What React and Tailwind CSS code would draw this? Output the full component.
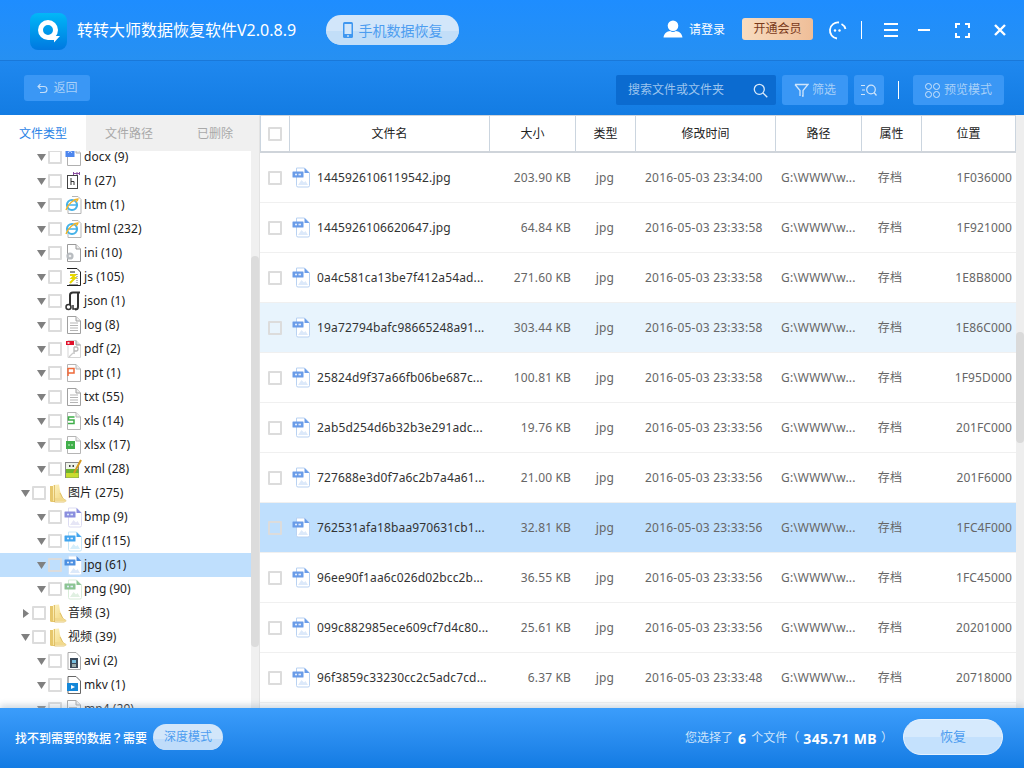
import React from "react";

const Check = ({ className = "" }) => (
  <span className={`block w-[14px] h-[14px] shrink-0 border-2 border-[#dcdcdc] rounded-[1px] ${className}`} />
);

const Sheet = ({ children, stroke = "#a9a9a9" }) => (
  <svg width="17" height="20" viewBox="0 0 17 20" className="shrink-0">
    <path d="M2.500 1.500H11L15.500 6V18.500H2.500Z" fill="#fff" stroke={stroke} />
    <path d="M11 1.500V6H15.500" fill="#eee" stroke={stroke} />
    {children}
  </svg>
);

const ImgIcon = ({ c = "#6a9ce8", soft = "#b9d2f2", hill = "#dce9fa" }) => (
  <svg width="19" height="21" viewBox="0 0 19 21" className="shrink-0">
    <path d="M4.500 1H12.500L17.500 6V18.500Q17.500 20 16 20H6Q4.500 20 4.500 18.500Z" fill="#fff" stroke={soft} />
    <path d="M12.500 1L17.500 6H12.500Z" fill={c} />
    <rect x="0.500" y="4.500" width="11" height="6" rx="0.500" fill={c} />
    <rect x="3" y="6.700" width="2" height="1.600" fill="#dfeafa" />
    <rect x="6.500" y="6.700" width="2.500" height="1.600" fill="#dfeafa" />
    <path d="M6 18L9.500 13L12 15.500L13.500 14L16 18Z" fill={hill} />
  </svg>
);

const Folder = () => (
  <svg width="18" height="20" viewBox="0 0 18 20" className="shrink-0">
    <defs>
      <linearGradient id="fold" x1="0" y1="0" x2="1" y2="1">
        <stop offset="0" stopColor="#fdf3c4" />
        <stop offset="1" stopColor="#f2d67c" />
      </linearGradient>
    </defs>
    <path d="M1 3H6V19H2.500Q1 19 1 17.500Z" fill="#e6c76c" />
    <path d="M4 2L10 1.500L11 8L13 13L14 18H4Z" fill="url(#fold)" />
    <path d="M5.500 2V19H15.500L17 17.500L14 15.500L11 10" fill="none" stroke="#d9b65a" strokeWidth="0.800" />
    <path d="M6 18.500H17.500L14 15H6Z" fill="#f1d98e" />
  </svg>
);

const TreeIcon = ({ t }) => {
  switch (t) {
    case "docx":
      return <Sheet stroke="#b0b0b0"><rect x="0.500" y="0" width="9" height="10" fill="#4d86ee" /><path d="M3 6L5 3.500L7 6" stroke="#cfe0ff" fill="none" /></Sheet>;
    case "h":
      return (
        <svg width="17" height="20" viewBox="0 0 17 20" className="shrink-0">
          <rect x="2.500" y="4.500" width="10" height="13" fill="#fff" stroke="#444" />
          <path d="M6 7V14M6 10.500H9V14" stroke="#333" fill="none" />
          <path d="M8 2.500H15M12 1V4M14.500 1V4M8.500 1V4" stroke="#8a4ea0" />
        </svg>
      );
    case "ie":
      return (
        <svg width="17" height="20" viewBox="0 0 17 20" className="shrink-0">
          <path d="M7 1.500H13L16 4.500V18.500H3V12" fill="#fff" stroke="#b5b5b5" />
          <ellipse cx="7" cy="10" rx="5" ry="5" fill="none" stroke="#45b2e8" strokeWidth="2.200" />
          <path d="M3 10H11" stroke="#45b2e8" strokeWidth="1.500" />
          <path d="M1 15C3 9 9 4 13 4C13 5 12 6 11 7" fill="none" stroke="#f0b429" strokeWidth="1.300" />
        </svg>
      );
    case "ini":
      return <Sheet stroke="#9a9a9a"><circle cx="5" cy="13" r="3.600" fill="#b8bcc0" /><circle cx="5" cy="13" r="1.300" fill="#eee" /></Sheet>;
    case "js":
      return (
        <svg width="17" height="20" viewBox="0 0 17 20" className="shrink-0">
          <path d="M2 1.500H12L15.500 5V18.500H2" fill="#fff" stroke="#222" />
          <path d="M5 5H10M4 18H13" stroke="#222" />
          <path d="M5 8H10L7 11H10L5 16" stroke="#e8d800" strokeWidth="2" fill="none" />
          <path d="M12 7V16" stroke="#777" strokeDasharray="1 1" />
        </svg>
      );
    case "json":
      return (
        <svg width="17" height="20" viewBox="0 0 17 20" className="shrink-0">
          <path d="M5 17V4Q5 1.500 8 1.500H15" fill="none" stroke="#333" strokeWidth="2" />
          <path d="M13 2V16Q13 18.500 10 18.500" fill="none" stroke="#333" strokeWidth="2" />
          <circle cx="3.500" cy="16" r="2.500" fill="#fff" stroke="#333" strokeWidth="1.500" />
          <path d="M8 14V18H11" stroke="#333" strokeWidth="1.500" fill="none" />
        </svg>
      );
    case "txt":
      return <Sheet stroke="#a0a0a0"><path d="M5 8H13M5 10.500H13M5 13H13M5 15.500H13" stroke="#b5b5b5" /></Sheet>;
    case "pdf":
      return (
        <svg width="17" height="20" viewBox="0 0 17 20" className="shrink-0">
          <path d="M3 1.500H11L15.500 6V18.500H3Z" fill="#fff" stroke="#d5d5d5" />
          <path d="M11 1.500V6H15.500" fill="#ddd" stroke="#999" />
          <rect x="1" y="2" width="8" height="4" fill="#e0102a" />
          <rect x="2.500" y="3.200" width="2" height="1.600" fill="#fff" />
          <path d="M9 8H11.500Q13 8 13 10T11.500 12H9V8M9 12V15" fill="none" stroke="#b9b9b9" strokeWidth="1.300" />
          <path d="M4 18L8 14" stroke="#ccc" strokeWidth="1.300" />
        </svg>
      );
    case "ppt":
      return <Sheet stroke="#b5b5b5"><path d="M3 5.500H9V10H3M3 5V13" fill="none" stroke="#ee6a3a" strokeWidth="1.500" /></Sheet>;
    case "xls":
      return <Sheet stroke="#b5b5b5"><path d="M9.500 6H3.500V9H9V12.500H3" fill="none" stroke="#3fae49" strokeWidth="1.500" /></Sheet>;
    case "xlsx":
      return <Sheet stroke="#b5b5b5"><rect x="1" y="6" width="9" height="8" fill="#3fae49" /><rect x="3" y="9.500" width="2" height="1" fill="#d0f0d0" /><rect x="6" y="9.500" width="2" height="1" fill="#d0f0d0" /></Sheet>;
    case "xml":
      return (
        <svg width="17" height="20" viewBox="0 0 17 20" className="shrink-0">
          <rect x="0.500" y="3.500" width="13" height="15" fill="#eef3e8" stroke="#888" />
          <rect x="1" y="10" width="12.500" height="8.500" fill="#6db52e" />
          <rect x="1" y="14" width="12.500" height="4.500" fill="#c7dd30" />
          <rect x="4" y="6" width="1.500" height="2" fill="#444" />
          <rect x="7.500" y="6" width="1.500" height="2" fill="#444" />
          <path d="M16 1L9 14" stroke="#d59a22" strokeWidth="2" />
        </svg>
      );
    case "bmp":
      return <ImgIcon c="#8a8ede" soft="#dcdcf2" hill="#e6e6f6" />;
    case "gif":
      return <ImgIcon c="#42a5ee" soft="#c6e6f8" hill="#d6eefa" />;
    case "jpg":
      return <ImgIcon c="#4d8fe0" soft="#cfe2f8" />;
    case "png":
      return <ImgIcon c="#8cc493" soft="#d8ecd9" hill="#e0f0e2" />;
    case "avi":
      return (
        <svg width="17" height="20" viewBox="0 0 17 20" className="shrink-0">
          <path d="M3 1.500H11L15.500 6V18.500H3Z" fill="#fff" stroke="#aaa" />
          <rect x="5" y="7" width="8" height="10" fill="#3b4a5a" />
          <rect x="7" y="9" width="4" height="3" fill="#78c0e0" />
          <rect x="7" y="13" width="4" height="3" fill="#9aa" />
        </svg>
      );
    case "mkv":
      return (
        <svg width="17" height="20" viewBox="0 0 17 20" className="shrink-0">
          <path d="M3 1.500H11L15.500 6V18.500H3Z" fill="#fff" stroke="#666" />
          <rect x="2" y="8" width="11" height="8" fill="#1487d8" />
          <path d="M6 10L10 12L6 14Z" fill="#fff" />
        </svg>
      );
    case "mp4":
      return <Sheet stroke="#aaa"><rect x="4" y="8" width="8" height="8" fill="#bbb" /></Sheet>;
    default:
      return <Folder />;
  }
};

const Arrow = ({ open }) =>
  open ? (
    <svg width="9" height="7" viewBox="0 0 9 7" className="shrink-0"><path d="M0 0H9L4.500 7Z" fill="#808080" /></svg>
  ) : (
    <svg width="9" height="9" viewBox="0 0 9 9" className="shrink-0"><path d="M2 0L8 4.500L2 9Z" fill="#808080" /></svg>
  );

const tree = [
  ["docx (9)", "docx", 2],
  ["h (27)", "h", 2],
  ["htm (1)", "ie", 2],
  ["html (232)", "ie", 2],
  ["ini (10)", "ini", 2],
  ["js (105)", "js", 2],
  ["json (1)", "json", 2],
  ["log (8)", "txt", 2],
  ["pdf (2)", "pdf", 2],
  ["ppt (1)", "ppt", 2],
  ["txt (55)", "txt", 2],
  ["xls (14)", "xls", 2],
  ["xlsx (17)", "xlsx", 2],
  ["xml (28)", "xml", 2],
  ["图片 (275)", "folder", 1],
  ["bmp (9)", "bmp", 2],
  ["gif (115)", "gif", 2],
  ["jpg (61)", "jpg", 2, "selected"],
  ["png (90)", "png", 2],
  ["音频 (3)", "folder", 1, "closed"],
  ["视频 (39)", "folder", 1],
  ["avi (2)", "avi", 2],
  ["mkv (1)", "mkv", 2],
  ["mp4 (29)", "mp4", 2],
];

const rows = [
  ["1445926106119542.jpg", "203.90 KB", "2016-05-03 23:34:00", "1F036000"],
  ["1445926106620647.jpg", "64.84 KB", "2016-05-03 23:33:58", "1F921000"],
  ["0a4c581ca13be7f412a54ad...", "271.60 KB", "2016-05-03 23:33:58", "1E8B8000"],
  ["19a72794bafc98665248a91...", "303.44 KB", "2016-05-03 23:33:58", "1E86C000", "bg-[#e8f4fd]"],
  ["25824d9f37a66fb06be687c...", "100.81 KB", "2016-05-03 23:33:58", "1F95D000"],
  ["2ab5d254d6b32b3e291adc...", "19.76 KB", "2016-05-03 23:33:56", "201FC000"],
  ["727688e3d0f7a6c2b7a4a61...", "21.00 KB", "2016-05-03 23:33:56", "201F6000"],
  ["762531afa18baa970631cb1...", "32.81 KB", "2016-05-03 23:33:56", "1FC4F000", "bg-[#bfdffd]"],
  ["96ee90f1aa6c026d02bcc2b...", "36.55 KB", "2016-05-03 23:33:56", "1FC45000"],
  ["099c882985ece609cf7d4c80...", "25.61 KB", "2016-05-03 23:33:56", "20201000"],
  ["96f3859c33230cc2c5adc7cd...", "6.37 KB", "2016-05-03 23:33:48", "20718000"],
];

const heads = ["文件名", "大小", "类型", "修改时间", "路径", "属性", "位置"];

const Gloss = ({ className = "" }) => (
  <span className={`absolute left-0 right-0 bottom-0 rounded-t-[50%] rounded-b-full ${className}`} />
);

export default function App() {
  return (
    <div className="w-[1024px] h-[768px] overflow-hidden flex flex-col bg-white text-[12px] font-['Noto_Sans','Noto_Sans_CJK_SC',sans-serif] tracking-[0.14px]">
      {/* title bar */}
      <header className="h-[61px] shrink-0 flex items-center border-b border-[#1a78d8] bg-gradient-to-b from-[#1e8dff] to-[#2690f2] text-white">
        <div className="ml-[30px] w-[37px] h-[37px] mt-[2px] rounded-lg bg-gradient-to-b from-[#04b7f7] to-[#0278e0] flex items-center justify-center">
          <svg width="24" height="24" viewBox="0 0 24 24">
            <circle cx="11" cy="11" r="7.500" fill="none" stroke="#fff" strokeWidth="5" />
            <path d="M11 19L17 14.500V17H23L17 23.500V21H11Z" fill="#fff" />
          </svg>
        </div>
        <h1 className="ml-[10px] text-[16px] tracking-normal font-normal whitespace-nowrap">转转大师数据恢复软件V2.0.8.9</h1>
        <button className="relative ml-[30px] w-[133px] h-[30px] rounded-full bg-[#d2e6fa] overflow-hidden flex items-center justify-center gap-[6px] text-[14px] text-[#4d9df0] tracking-normal">
          <Gloss className="h-[14px] bg-[#c2def8]" />
          <svg width="10" height="16" viewBox="0 0 10 16" className="relative"><rect width="10" height="16" rx="1.500" fill="#3f97f0" /><rect x="1.500" y="2" width="7" height="10" fill="#d2e6fa" /><circle cx="5" cy="14" r="0.900" fill="#d2e6fa" /></svg>
          <span className="relative">手机数据恢复</span>
        </button>
        <div className="flex-1" />
        <svg width="20" height="18" viewBox="0 0 20 19" className="mb-[3px]"><circle cx="10" cy="6" r="5.600" fill="#fff" /><path d="M0 18.500C0.500 13.500 4 12 7 11.500C8.500 13 11.500 13 13 11.500C16 12 19.500 13.500 20 18.500Z" fill="#fff" /></svg>
        <span className="ml-[6px] mb-[1px] tracking-normal">请登录</span>
        <span className="ml-[17px] mb-[2px] w-[71px] h-[22px] rounded-[3px] bg-gradient-to-r from-[#f8dcc0] to-[#efbe98] text-[#79391a] flex items-center justify-center tracking-normal">开通会员</span>
        <svg width="19" height="19" viewBox="0 0 19 19" className="ml-[15px]">
          <path d="M11 1.500A8 8 0 1 0 9 17.500" fill="none" stroke="#fff" strokeWidth="1.800" />
          <path d="M13.500 3A8 8 0 0 1 17.500 8" fill="none" stroke="#fff" strokeWidth="1.800" />
          <circle cx="7" cy="9.500" r="1.200" fill="#fff" /><circle cx="11.500" cy="9.500" r="1.200" fill="#fff" />
        </svg>
        <span className="ml-[14px] w-px h-[18px] bg-white" />
        <svg width="14" height="14" viewBox="0 0 14 14" className="ml-[22px]"><path d="M0 1H14M0 7H14M0 13H14" stroke="#fff" strokeWidth="2" /></svg>
        <span className="ml-[20px] w-[12px] h-[2px] bg-white" />
        <svg width="15" height="15" viewBox="0 0 15 15" className="ml-[25px]"><path d="M1 5V1H5M10 1H14V5M14 10V14H10M5 14H1V10" stroke="#fff" strokeWidth="2" fill="none" /></svg>
        <svg width="12" height="12" viewBox="0 0 12 12" className="ml-[24px] mr-[18px]"><path d="M1 1L11 11M11 1L1 11" stroke="#fff" strokeWidth="2.400" /></svg>
      </header>

      {/* toolbar */}
      <div className="h-[54px] shrink-0 flex items-start pt-[14px] bg-gradient-to-b from-[#1f88ef] to-[#137ce3] text-[#a8d0f8]">
        <button className="ml-[24px] w-[66px] h-[26px] rounded-[3px] bg-[#3a97f5] flex items-center justify-center gap-[5px] pl-px tracking-normal">
          <svg width="11" height="11" viewBox="0 0 11 11"><path d="M3.500 1L1 3.500L3.500 6M1.500 3.500H7Q10 3.500 10 6.500T7 9.500H3" fill="none" stroke="#c4def9" strokeWidth="1.100" /></svg>
          返回
        </button>
        <div className="flex-1" />
        <div className="w-[160px] h-[30px] rounded-[2px] bg-[#0b6bd0] flex items-center pl-[12px] pr-[8px] text-[#9cc4ee] tracking-normal">
          <span className="flex-1">搜索文件或文件夹</span>
          <svg width="15" height="15" viewBox="0 0 15 15"><circle cx="6.300" cy="6.300" r="5" fill="none" stroke="#d8e9fa" strokeWidth="1.300" /><path d="M10 10L14.300 14.300" stroke="#d8e9fa" strokeWidth="1.300" /></svg>
        </div>
        <button className="ml-[6px] w-[66px] h-[30px] rounded-[3px] bg-[#3a97f5] flex items-center justify-center gap-[3px] tracking-normal">
          <svg width="15" height="15" viewBox="0 0 15 15"><path d="M1 1.500H14L9 7.500V13H8M6 13V7.500L1 1.500" fill="none" stroke="#d0e5fb" strokeWidth="1.300" /></svg>
          筛选
        </button>
        <button className="ml-[6px] w-[30px] h-[30px] rounded-[3px] bg-[#3a97f5] flex items-center justify-center">
          <svg width="16" height="12" viewBox="0 0 16 12"><path d="M0 1.500H4M1 6H4M0 10.500H4" stroke="#d0e5fb" /><circle cx="10" cy="5.500" r="4.300" fill="none" stroke="#d0e5fb" strokeWidth="1.200" /><path d="M13 8.500L15.500 11.500" stroke="#d0e5fb" strokeWidth="1.200" /></svg>
        </button>
        <span className="ml-[14px] mt-[6px] w-px h-[18px] bg-white" />
        <button className="ml-[14px] mr-[20px] w-[91px] h-[30px] rounded-[3px] bg-[#3a97f5] flex items-center justify-center gap-[4px] tracking-normal">
          <svg width="15" height="15" viewBox="0 0 15 15" fill="none" stroke="#d0e5fb"><circle cx="3.500" cy="3.500" r="3" /><circle cx="11.500" cy="3.500" r="3" /><circle cx="3.500" cy="11.500" r="3" /><circle cx="11.500" cy="11.500" r="3" /></svg>
          预览模式
        </button>
      </div>

      {/* body */}
      <main className="flex-1 min-h-0 flex">
        {/* left */}
        <aside className="w-[260px] shrink-0 flex flex-col border-r border-[#e3e3e3]">
          <div className="h-[36px] shrink-0 flex bg-[#f0f0f0] text-[#a9a9a9] tracking-normal">
            <span className="w-[86px] pt-[2px] bg-white text-[#2a83e6] flex items-center justify-center">文件类型</span>
            <span className="w-[86px] pt-[2px] flex items-center justify-center">文件路径</span>
            <span className="w-[86px] pt-[2px] flex items-center justify-center">已删除</span>
          </div>
          <div className="flex-1 min-h-0 flex">
            <div className="flex-1 overflow-hidden">
              <ul className="-mt-[6px] text-[#222] tracking-[0.06px]">
                {tree.map(([label, icon, level, flag]) => (
                  <li key={label} className={`h-[24px] flex items-center ${flag === "selected" ? "bg-[#bfdffd]" : ""} ${level === 1 ? "pl-[21px]" : "pl-[37px]"}`}>
                    <span className="w-[11px] flex justify-start"><Arrow open={flag !== "closed"} /></span>
                    <Check />
                    <span className="ml-[2px] w-[19px] flex justify-center"><TreeIcon t={icon} /></span>
                    <span className="ml-[1px] whitespace-nowrap">{label}</span>
                  </li>
                ))}
              </ul>
            </div>
            <div className="w-[8px] shrink-0 bg-[#f0f0f0]">
              <div className="mt-[105px] h-[391px] rounded-full bg-[#dcdcdc]" />
            </div>
          </div>
        </aside>

        {/* right */}
        <section className="flex-1 min-w-0 flex">
          <div className="w-[756px] shrink-0">
            <div className="h-[38px] grid grid-cols-[30px_200px_86px_60px_140px_86px_60px_94px] border-t border-b-2 border-[#cfd4da] text-[#222] tracking-normal">
              <div className="flex items-center justify-center border-x border-[#cbd5df]"><Check /></div>
              {heads.map((h) => (
                <div key={h} className="flex items-center justify-center border-r border-[#cbd5df]">{h}</div>
              ))}
            </div>
            {rows.map(([name, size, time, pos, bg]) => (
              <div key={name} className={`h-[50px] grid grid-cols-[30px_200px_86px_60px_140px_86px_60px_94px] items-center border-b border-[#f0f0f0] text-[#666] ${bg || ""}`}>
                <div className="flex justify-center"><Check /></div>
                <div className="flex items-center pl-[2px] gap-[6px] text-[#333] whitespace-nowrap"><ImgIcon />{name}</div>
                <div className="text-right pr-[5px]">{size}</div>
                <div className="text-center pr-[2px]">jpg</div>
                <div className="pl-[9px] whitespace-nowrap tracking-[0.22px]">{time}</div>
                <div className="pl-[5px] whitespace-nowrap">G:\WWW\w...</div>
                <div className="text-center pr-[4px]">存档</div>
                <div className="text-right pr-[4px]">{pos}</div>
              </div>
            ))}
          </div>
          <div className="w-[8px] shrink-0 bg-[#eeeeee]">
            <div className="mt-[217px] h-[111px] rounded-full bg-[#dadada]" />
          </div>
        </section>
      </main>

      {/* footer */}
      <footer className="relative z-10 h-[60px] shrink-0 flex items-center bg-gradient-to-b from-[#3b9dfb] to-[#127be3] shadow-[0_-3px_6px_rgba(150,170,190,0.45)] text-white">
        <span className="ml-[15px] font-medium tracking-normal">找不到需要的数据<span className="font-['Noto_Sans_CJK_TC',sans-serif]">？</span>需要</span>
        <button className="relative ml-[6px] mb-[2px] w-[70px] h-[26px] rounded-full bg-[#d2e6fa] overflow-hidden flex items-center justify-center text-[#4d9df0] tracking-normal">
          <Gloss className="h-[11px] bg-[#bfdcfa]" />
          <span className="relative">深度模式</span>
        </button>
        <span className="ml-[462px] w-[48px] text-[#cfe5fb] tracking-normal whitespace-nowrap">您选择了</span>
        <b className="ml-[5px] text-[14px] font-bold">6</b>
        <span className="ml-[5px] text-[#cfe5fb] tracking-normal whitespace-nowrap">个文件（</span>
        <b className="ml-[4px] text-[14px] font-bold tracking-[0.4px] whitespace-nowrap">345.71 MB</b>
        <span className="ml-[4px] text-[#cfe5fb] tracking-normal">）</span>
        <div className="flex-1" />
        <button className="relative mb-[2px] mr-[21px] w-[100px] h-[36px] rounded-full bg-[#d6eafd] overflow-hidden flex items-center justify-center text-[#4d9df0] text-[13px] tracking-normal border border-[#e6f2fe]">
          <Gloss className="h-[17px] bg-[#c4e1fd]" />
          <span className="relative">恢复</span>
        </button>
      </footer>
    </div>
  );
}
